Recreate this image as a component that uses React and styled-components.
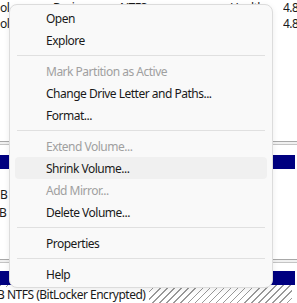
import React from "react";
import styled, { createGlobalStyle } from "styled-components";

const Global = createGlobalStyle`
  html, body { margin: 0; padding: 0; background: #ffffff; }
  body { overflow: hidden; }
`;

const Page = styled.div`
  position: relative;
  width: 297px;
  height: 303px;
  overflow: hidden;
  background: #ffffff;
  font-family: "Noto Sans", "Open Sans", sans-serif;
  font-size: 12px;
  letter-spacing: -0.5px;
  color: #1a1a1a;
`;

const Backdrop = styled.div`
  display: flex;
  flex-direction: column;
  width: 100%;
  height: 100%;
`;

const ListRow = styled.div`
  display: flex;
  height: 16px;
  align-items: center;
  white-space: nowrap;
`;

const Cell = styled.span`
  flex: 0 0 ${(p) => p.$w}px;
  margin-right: ${(p) => p.$mr || 0}px;
  overflow: hidden;
  line-height: 16px;
`;

const ListGap = styled.div`
  height: ${(p) => p.$h}px;
  flex: 0 0 auto;
`;

const Splitter = styled.div`
  flex: 0 0 auto;
  height: 2px;
  border-top: 1px solid #a8a8a8;
  border-bottom: 1px solid #c4c4c4;
  background: #f0f0f0;
`;

const NavyBar = styled.div`
  flex: 0 0 auto;
  height: 14px;
  margin-right: 2px;
  background: #000080;
`;

const DiskBody = styled.div`
  flex: 0 0 auto;
  height: ${(p) => p.$h}px;
  display: flex;
  flex-direction: column;
  padding-top: ${(p) => p.$pt}px;
  margin-right: 2px;
`;

const DiskText = styled.div`
  line-height: 18px;
  white-space: nowrap;
  margin-left: -${(p) => p.$shift}px;
`;

const Hatched = styled.div`
  flex: 1 1 auto;
  margin-right: 5px;
  display: flex;
  flex-direction: column;
  justify-content: flex-end;
  background: repeating-linear-gradient(
    135deg,
    #9a9a9a 0px,
    #9a9a9a 1px,
    #ffffff 1px,
    #ffffff 5px
  );
`;

const HatchLabel = styled.div`
  align-self: flex-start;
  background: #ffffff;
  line-height: 16px;
  padding-right: 4px;
  margin-left: -3px;
  white-space: nowrap;
`;

const Menu = styled.div`
  position: absolute;
  left: 9px;
  top: 4px;
  width: 262px;
  padding: 2px 0;
  background: #f9f9f9;
  border: 1px solid #dcdcdc;
  border-radius: 8px;
  box-shadow: 0 2px 6px rgba(0, 0, 0, 0.08);
  display: flex;
  flex-direction: column;
`;

const Item = styled.div`
  height: 22px;
  margin: 0 5px;
  padding-left: 31px;
  display: flex;
  align-items: center;
  border-radius: 4px;
  white-space: nowrap;
  color: ${(p) => (p.$disabled ? "#a0a0a0" : "#1a1a1a")};
  background: ${(p) => (p.$hover ? "#f0f0f0" : "transparent")};
`;

const Sep = styled.div`
  height: 1px;
  margin: 4px 7px;
  background: #e0e0e0;
`;

const entries = [
  { t: "Open" },
  { t: "Explore" },
  { sep: true },
  { t: "Mark Partition as Active", d: true },
  { t: "Change Drive Letter and Paths..." },
  { t: "Format..." },
  { sep: true },
  { t: "Extend Volume...", d: true },
  { t: "Shrink Volume...", h: true },
  { t: "Add Mirror...", d: true },
  { t: "Delete Volume..." },
  { sep: true },
  { t: "Properties" },
  { sep: true },
  { t: "Help" },
];

const rows = [0, 1];

export default function App() {
  return (
    <Page>
      <Global />
      <Backdrop>
        {rows.map((r) => (
          <ListRow key={r}>
            <Cell $w={53}>ol</Cell>
            <Cell $w={67}>Basic</Cell>
            <Cell $w={110}>NTFS</Cell>
            <Cell $w={38} $mr={15}>Healthy (B</Cell>
            <Cell $w={14}>4.8</Cell>
          </ListRow>
        ))}
        <ListGap $h={109} />
        <Splitter />
        <ListGap $h={10} />
        <NavyBar />
        <DiskBody $h={73} $pt={17}>
          <DiskText $shift={0}>B</DiskText>
          <DiskText $shift={4}>(B</DiskText>
        </DiskBody>
        <Splitter />
        <ListGap $h={8} />
        <NavyBar />
        <Hatched>
          <HatchLabel>B NTFS (BitLocker Encrypted)</HatchLabel>
        </Hatched>
      </Backdrop>
      <Menu>
        {entries.map((e, i) =>
          e.sep ? (
            <Sep key={i} />
          ) : (
            <Item key={i} $disabled={e.d} $hover={e.h}>
              {e.t}
            </Item>
          )
        )}
      </Menu>
    </Page>
  );
}
